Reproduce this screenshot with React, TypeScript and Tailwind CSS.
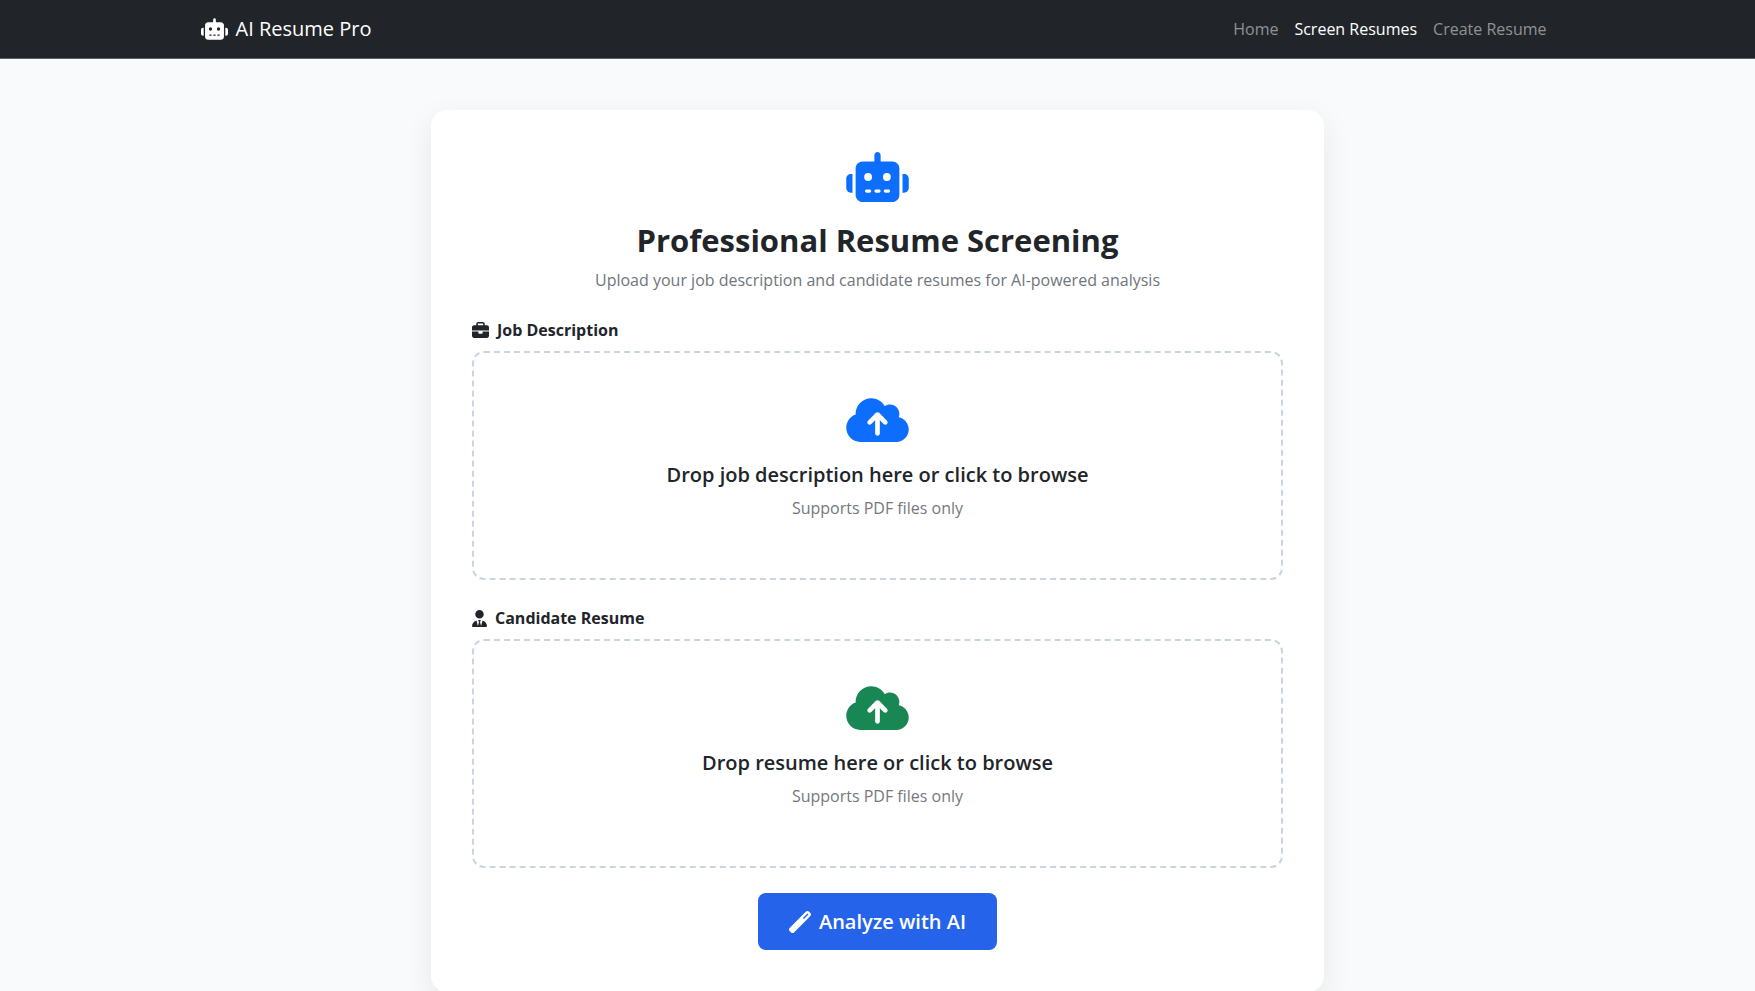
import type { ReactNode } from "react";
import {
  FaRobot,
  FaBriefcase,
  FaUserTie,
  FaCloudArrowUp,
  FaWandMagic,
} from "react-icons/fa6";

const links = [
  { label: "Home", active: false },
  { label: "Screen Resumes", active: true },
  { label: "Create Resume", active: false },
];

function Navbar() {
  return (
    <header className="border-b border-[#5f6265] bg-[#212529]">
      <nav className="mx-auto flex h-[58px] max-w-[1354px] items-center justify-between">
        <a href="#" className="flex items-center gap-2 text-[20px] text-white">
          <FaRobot className="h-[22px] w-[27px]" />
          AI Resume Pro
        </a>
        <ul className="flex">
          {links.map((link) => (
            <li key={link.label}>
              <a
                href="#"
                className={link.active ? "px-2 text-white" : "px-2 text-[#909294]"}
              >
                {link.label}
              </a>
            </li>
          ))}
        </ul>
      </nav>
    </header>
  );
}

type UploadFieldProps = {
  id: string;
  label: string;
  icon: ReactNode;
  prompt: string;
  cloud: string;
};

function UploadField({ id, label, icon, prompt, cloud }: UploadFieldProps) {
  return (
    <div className="mb-[25px]">
      <label htmlFor={id} className="mb-2 flex h-[26px] items-center gap-2 font-bold">
        {icon}
        {label}
      </label>
      <label
        htmlFor={id}
        className="flex h-[229px] cursor-pointer flex-col items-center rounded-xl border-2 border-dashed border-[#cbd5e1] pt-[42px]"
      >
        <FaCloudArrowUp className={cloud} />
        <span className="mt-[18px] text-[20px] leading-6 font-semibold">{prompt}</span>
        <span className="mt-2 leading-[26px] text-[#75797d]">Supports PDF files only</span>
        <input id={id} type="file" accept="application/pdf" className="sr-only" />
      </label>
    </div>
  );
}

export default function App() {
  return (
    <div className="min-h-screen bg-[#f8fafc] font-['Open_Sans',sans-serif] text-[16px] text-[#212529]">
      <Navbar />
      <main className="mx-auto max-w-[893px] pt-[51px]">
        <section className="rounded-2xl bg-white px-[41px] pt-[42px] pb-[42px] shadow-[0_10px_30px_rgba(0,0,0,0.08)]">
          <div className="mb-6 flex flex-col items-center text-center">
            <FaRobot className="h-[50px] w-[63px] text-[#0d6efd]" />
            <h1 className="mt-[18px] text-[31px] leading-10 font-bold">
              Professional Resume Screening
            </h1>
            <p className="mt-[7px] leading-[26px] text-[#6f757b]">
              Upload your job description and candidate resumes for AI-powered analysis
            </p>
          </div>
          <form>
            <UploadField
              id="job-description"
              label="Job Description"
              icon={<FaBriefcase className="size-[17px]" />}
              prompt="Drop job description here or click to browse"
              cloud="h-[50px] w-[63px] text-[#0d6efd]"
            />
            <UploadField
              id="candidate-resume"
              label="Candidate Resume"
              icon={<FaUserTie className="h-[17px] w-[15px]" />}
              prompt="Drop resume here or click to browse"
              cloud="h-[50px] w-[63px] text-[#198754]"
            />
            <button
              type="button"
              className="mx-auto flex h-[57px] items-center gap-2 rounded-lg bg-[#2563eb] px-[31px] text-[20px] font-semibold text-white"
            >
              <FaWandMagic className="size-[22px]" />
              Analyze with AI
            </button>
          </form>
        </section>
      </main>
    </div>
  );
}
